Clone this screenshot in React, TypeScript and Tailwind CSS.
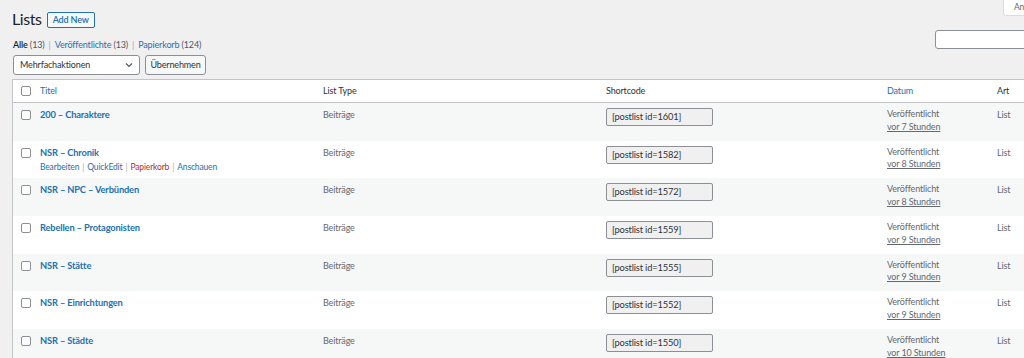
const rows = [
  { title: "200 – Charaktere", id: 1601, ago: "vor 7 Stunden" },
  { title: "NSR – Chronik", id: 1582, ago: "vor 8 Stunden", actions: true },
  { title: "NSR – NPC – Verbünden", id: 1572, ago: "vor 8 Stunden" },
  { title: "Rebellen – Protagonisten", id: 1559, ago: "vor 9 Stunden" },
  { title: "NSR – Stätte", id: 1555, ago: "vor 9 Stunden" },
  { title: "NSR – Einrichtungen", id: 1552, ago: "vor 9 Stunden" },
  { title: "NSR – Städte", id: 1550, ago: "vor 10 Stunden" },
];

const cols = "grid grid-cols-[22px_283px_283px_281px_110px_1fr]";

function Checkbox() {
  return (
    <span className="block h-[10px] w-[10px] rounded-[2px] border border-[#8c8f94] bg-white" />
  );
}

export default function App() {
  return (
    <div
      className="relative h-[358px] w-[1024px] overflow-hidden bg-[#f0f0f1] text-[9px] tracking-[-0.15px] text-[#3c434a]"
      style={{ fontFamily: 'Lato, "Open Sans", sans-serif' }}
    >
      {/* screen options tab */}
      <div className="absolute right-[-6px] top-[-1px] flex h-[17px] w-[27px] items-center rounded-bl-[3px] border border-[#dcdcde] bg-white pl-[10px] text-[8.5px] text-[#646970]">
        An
      </div>

      <div className="flex items-center pl-[12px] pt-[9px]">
        <h1 className="text-[16px] leading-[20px] tracking-[-0.4px] text-[#1d2327]">Lists</h1>
        <button className="ml-[5px] mt-[1px] h-[16px] rounded-[2px] border border-[#2271b1] bg-[#f6f7f7] px-[5px] text-[9px] leading-[14px] font-semibold text-[#2271b1]">
          Add New
        </button>
      </div>

      <div className="flex items-start justify-between pl-[13px] pt-[9px]">
        <div className="flex items-center gap-[4px] leading-[13px] text-[#50575e]">
          <span>
            <span className="font-semibold text-[#1d2327]">Alle</span> (13)
          </span>
          <span className="text-[#a7aaad]">|</span>
          <span>
            <span className="text-[#2271b1]">Veröffentlichte</span> (13)
          </span>
          <span className="text-[#a7aaad]">|</span>
          <span>
            <span className="text-[#2271b1]">Papierkorb</span> (124)
          </span>
        </div>
        <div className="-mr-[6px] -mt-[8px] h-[19px] w-[95px] rounded-[3px] border border-[#8c8f94] bg-white" />
      </div>

      <div className="flex items-center gap-[5px] pl-[13px] pt-[4px]">
        <div className="flex h-[20px] w-[127px] items-center justify-between rounded-[3px] border border-[#8c8f94] bg-white pl-[6px] pr-[6px] text-[9px] text-[#2c3338]">
          <span>Mehrfachaktionen</span>
          <svg width="8" height="6" viewBox="0 0 8 6" fill="none">
            <path d="M1 1.5 4 4.5 7 1.5" stroke="#50575e" strokeWidth="1.2" />
          </svg>
        </div>
        <button className="h-[20px] w-[61px] rounded-[3px] border border-[#8c8f94] bg-[#f6f7f7] text-[9px] text-[#2c3338]">
          Übernehmen
        </button>
      </div>

      <div className="ml-[12px] mt-[4px] w-[1100px] border border-r-0 border-[#c3c4c7] bg-white">
        <div className={`${cols} h-[23px] items-center border-b border-[#c3c4c7] bg-white`}>
          <div className="pl-[8px]">
            <Checkbox />
          </div>
          <div className="pl-[5px] text-[#2271b1]">Titel</div>
          <div className="pl-[5px] text-[#2c3338]">List Type</div>
          <div className="pl-[5px] text-[#2c3338]">Shortcode</div>
          <div className="pl-[5px] text-[#2271b1]">Datum</div>
          <div className="pl-[5px] text-[#2c3338]">Art</div>
        </div>

        {rows.map((r, i) => (
          <div
            key={r.id}
            className={`${cols} h-[37.7px] items-start ${i % 2 === 0 ? "bg-[#f6f7f7]" : "bg-white"}`}
          >
            <div className="pl-[8px] pt-[7px]">
              <Checkbox />
            </div>
            <div className="pl-[5px] pt-[5px]">
              <div className="text-[9.3px] font-bold leading-[13px] text-[#2271b1]">{r.title}</div>
              {r.actions && (
                <div className="mt-[3px] flex items-center gap-[3px] text-[8.5px] leading-[11px]">
                  <span className="text-[#2271b1]">Bearbeiten</span>
                  <span className="text-[#a7aaad]">|</span>
                  <span className="text-[#2271b1]">QuickEdit</span>
                  <span className="text-[#a7aaad]">|</span>
                  <span className="text-[#b32d2e]">Papierkorb</span>
                  <span className="text-[#a7aaad]">|</span>
                  <span className="text-[#2271b1]">Anschauen</span>
                </div>
              )}
            </div>
            <div className="pl-[5px] pt-[5px] leading-[13px] text-[#646970]">Beiträge</div>
            <div className="pl-[5px] pt-[5px]">
              <div className="flex h-[18px] w-[107px] items-center rounded-[2px] border border-[#8c8f94] bg-[#f0f0f1] pl-[5px] text-[9.3px] text-[#2c3338]">
                [postlist id={r.id}]
              </div>
            </div>
            <div className="pl-[5px] pt-[5px] leading-[12.5px] text-[#646970]">
              <div>Veröffentlicht</div>
              <div className="underline">{r.ago}</div>
            </div>
            <div className="pl-[5px] pt-[5px] leading-[13px] text-[#646970]">List</div>
          </div>
        ))}
      </div>
    </div>
  );
}
